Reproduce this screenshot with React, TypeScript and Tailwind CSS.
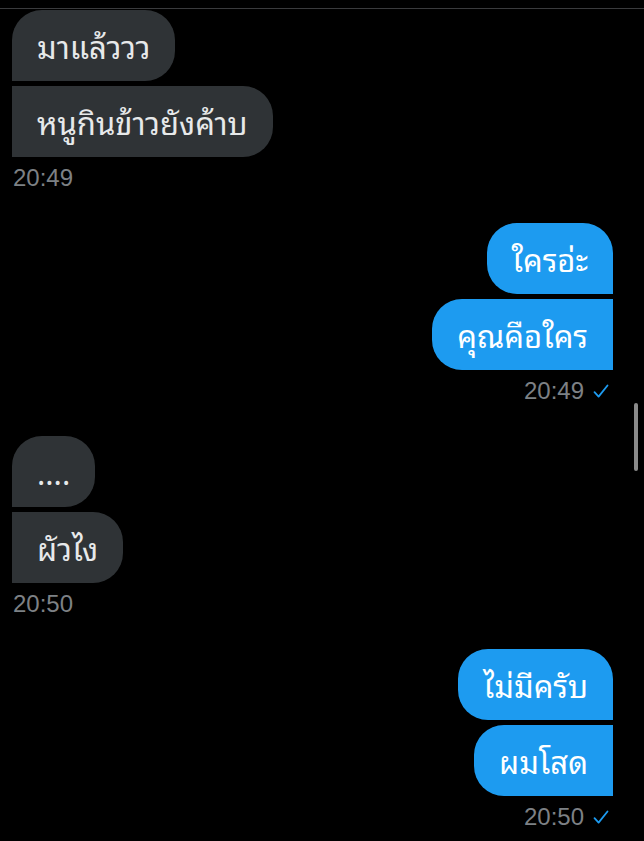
import React from "react";

const thaiFont = { fontFamily: '"Noto Sans Thai Looped", "Thonburi", "Loma", "Garuda", "Noto Sans Thai", "Noto Sans", sans-serif' };
const timeFont = { fontFamily: '"Liberation Sans", Arial, sans-serif' };

function Check() {
  return (
    <svg width="16" height="15" viewBox="0 0 16 15" className="ml-[9px]">
      <path d="M1.5 8.2 L5.6 12.6 L14.5 1.5" fill="none" stroke="#1d9bf0" strokeWidth="1.8" strokeLinecap="round" strokeLinejoin="round" />
    </svg>
  );
}

function LeftGroup({ msgs, time }: { msgs: string[]; time: string }) {
  return (
    <div className="flex flex-col items-start">
      <div className="flex flex-col items-start gap-[5px]">
        {msgs.map((m, i) => (
          <div
            key={i}
            className={
              "bg-[#2f3336] text-[#e7e9ea] text-[31px] leading-[37px] px-[25px] py-[17px] " +
              (i === 0 ? "rounded-t-[30px] rounded-br-[30px] rounded-bl-none" : "rounded-r-[30px] rounded-l-none")
            }
            style={thaiFont}
          >
            {m}
          </div>
        ))}
      </div>
      <div className="mt-[7px] text-[24px] leading-[28px] text-[#7d8185] pl-[1px]" style={timeFont}>
        {time}
      </div>
    </div>
  );
}

function RightGroup({ msgs, time }: { msgs: string[]; time: string }) {
  return (
    <div className="flex flex-col items-end">
      <div className="flex flex-col items-end gap-[5px]">
        {msgs.map((m, i) => (
          <div
            key={i}
            className={
              "bg-[#1d9bf0] text-white text-[31px] leading-[37px] px-[25px] py-[17px] " +
              (i === 0 ? "rounded-t-[30px] rounded-bl-[30px] rounded-br-none" : "rounded-l-[30px] rounded-r-none")
            }
            style={thaiFont}
          >
            {m}
          </div>
        ))}
      </div>
      <div className="mt-[7px] flex items-center text-[24px] leading-[28px] text-[#7d8185] pr-[4px]" style={timeFont}>
        <span>{time}</span>
        <Check />
      </div>
    </div>
  );
}

export default function App() {
  return (
    <div className="relative w-[644px] h-[841px] bg-black overflow-hidden">
      <div className="h-[8px]" />
      <div className="h-[1px] bg-[#3a3b3d]" />
      <div className="pl-[12px] pr-[31px] pt-[1px] flex flex-col gap-[31px]">
        <LeftGroup msgs={["มาแล้ววว", "หนูกินข้าวยังค้าบ"]} time="20:49" />
        <RightGroup msgs={["ใครอ่ะ", "คุณคือใคร"]} time="20:49" />
        <LeftGroup msgs={["....", "ผัวไง"]} time="20:50" />
        <RightGroup msgs={["ไม่มีครับ", "ผมโสด"]} time="20:50" />
      </div>
      <div className="absolute left-[634px] top-[403px] w-[4px] h-[68px] rounded-full bg-[#8a8a8a]" />
    </div>
  );
}
